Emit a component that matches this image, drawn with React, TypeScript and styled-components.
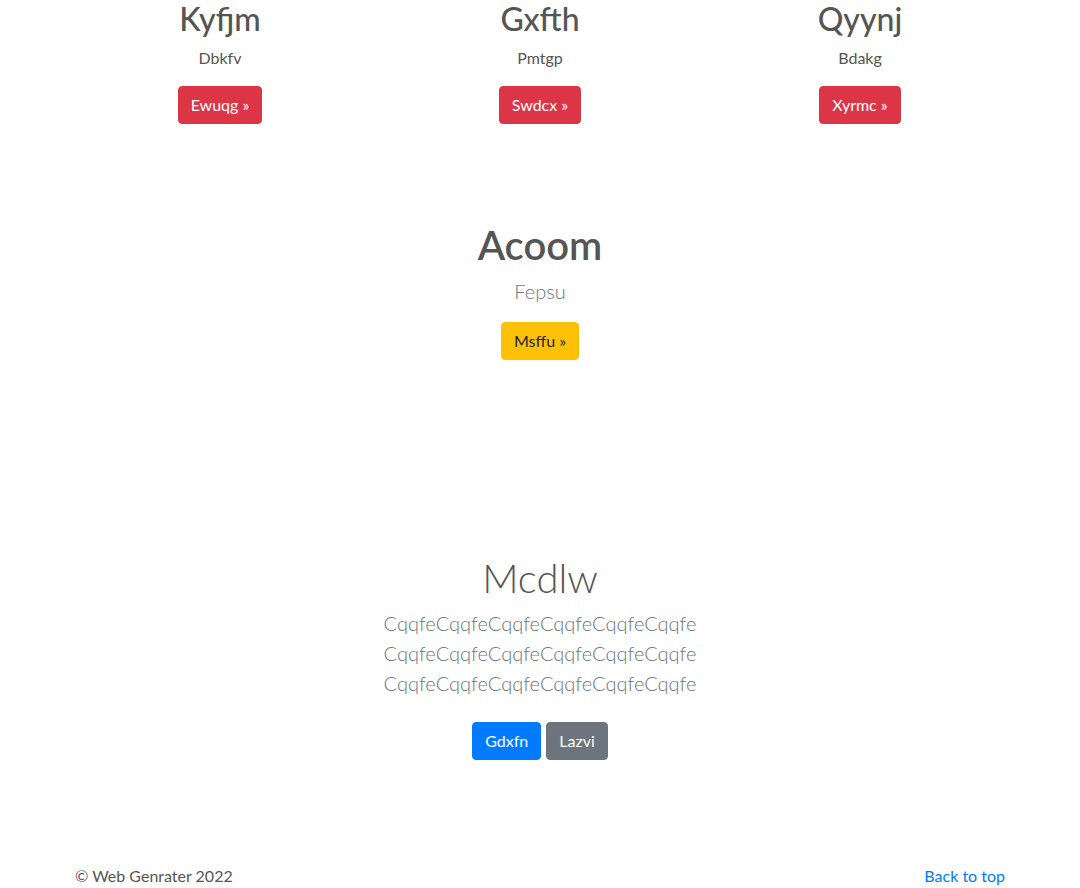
import styled, { createGlobalStyle } from "styled-components";

const GlobalStyle = createGlobalStyle`
  body {
    margin: 0;
    font-family: "Segoe UI", Lato, "Open Sans", "Liberation Sans", sans-serif;
    font-size: 16px;
    line-height: 1.5;
    color: #555;
    background: #fff;
  }
`;

const Page = styled.div`
  width: 960px;
  margin: 0 auto;
  padding: 0 15px;
  box-sizing: border-box;
`;

const Row = styled.div`
  display: grid;
  grid-template-columns: repeat(3, 1fr);
  margin: 0 -15px;
  padding-bottom: 16px;
`;

const Col = styled.div`
  display: flex;
  flex-direction: column;
  align-items: center;
  text-align: center;
  padding: 0 15px;
`;

const Title = styled.h2`
  margin: 0 0 8px;
  font-size: 32px;
  font-weight: 500;
  line-height: 1.2;
  color: #555;
`;

const Text = styled.p`
  margin: 0 0 16px;
`;

const Section = styled.section<{ $top: number }>`
  display: flex;
  flex-direction: column;
  align-items: center;
  text-align: center;
  padding-top: ${({ $top }) => $top}px;
`;

const Heading = styled.h1<{ $light?: boolean }>`
  margin: 0 0 ${({ $light }) => ($light ? 6 : 7)}px;
  font-size: 40px;
  line-height: 1.2;
  font-weight: ${({ $light }) => ($light ? 300 : 600)};
  color: #555;
`;

const Lead = styled.p`
  margin: 0 0 16px;
  font-size: 20px;
  font-weight: 300;
  line-height: 1.5;
  color: #6c757d;
`;

const Actions = styled.p`
  display: flex;
  gap: 5px;
  margin: 0 0 16px;
`;

const variants = {
  danger: { bg: "#dc3545", fg: "#fff" },
  warning: { bg: "#ffc107", fg: "#212529" },
  primary: { bg: "#007bff", fg: "#fff" },
  secondary: { bg: "#6c757d", fg: "#fff" },
};

const Button = styled.a<{ $variant: keyof typeof variants; $spaced?: boolean }>`
  display: inline-block;
  padding: 6px 12px;
  font-size: 16px;
  line-height: 24px;
  border: 1px solid ${({ $variant }) => variants[$variant].bg};
  border-radius: 4px;
  text-decoration: none;
  cursor: pointer;
  background: ${({ $variant }) => variants[$variant].bg};
  color: ${({ $variant }) => variants[$variant].fg};
  ${({ $spaced }) => $spaced && "margin: 8px 0;"}
`;

const Footer = styled.footer`
  display: flex;
  justify-content: space-between;
  padding-top: 80px;
  color: #555;
`;

const TopLink = styled.a`
  color: #007bff;
  text-decoration: none;
`;

const features = [
  { title: "Kyfjm", text: "Dbkfv", action: "Ewuqg" },
  { title: "Gxfth", text: "Pmtgp", action: "Swdcx" },
  { title: "Qyynj", text: "Bdakg", action: "Xyrmc" },
];

export default function App() {
  return (
    <>
      <GlobalStyle />
      <Page>
        <Row>
          {features.map((f) => (
            <Col key={f.title}>
              <Title>{f.title}</Title>
              <Text>{f.text}</Text>
              <Button $variant="danger">{f.action} &raquo;</Button>
            </Col>
          ))}
        </Row>

        <Section $top={81}>
          <Heading>Acoom</Heading>
          <Lead>Fepsu</Lead>
          <Actions>
            <Button $variant="warning">Msffu &raquo;</Button>
          </Actions>
        </Section>

        <Section $top={178}>
          <Heading $light>Mcdlw</Heading>
          <Lead>
            CqqfeCqqfeCqqfeCqqfeCqqfeCqqfe
            <br />
            CqqfeCqqfeCqqfeCqqfeCqqfeCqqfe
            <br />
            CqqfeCqqfeCqqfeCqqfeCqqfeCqqfe
          </Lead>
          <Actions>
            <Button $variant="primary" $spaced>
              Gdxfn
            </Button>
            <Button $variant="secondary" $spaced>
              Lazvi
            </Button>
          </Actions>
        </Section>

        <Footer>
          <span>&copy; Web Genrater 2022</span>
          <TopLink href="#">Back to top</TopLink>
        </Footer>
      </Page>
    </>
  );
}
